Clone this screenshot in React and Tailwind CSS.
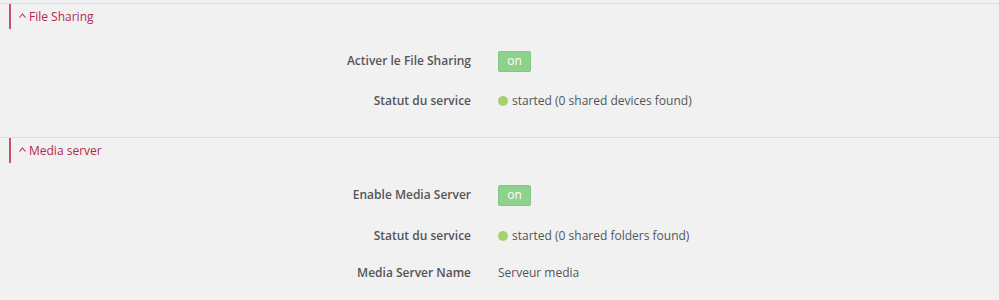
const FONT = { fontFamily: '"Open Sans", "Noto Sans", sans-serif' };

function SectionHeader({ title }) {
	return (
		<div className="flex h-[26px] items-center border-t border-[#dcdcdc]">
			<div className="ml-[9px] h-full w-[2px] bg-[#c4546a]" />
			<div className="ml-[8px] flex items-center gap-[3px] text-[12px] text-[#b3284d]">
				<svg width="7" height="5" viewBox="0 0 7 5" fill="none" className="mt-[-3px]">
					<path d="M0.5 4.5 L3.5 1 L6.5 4.5" stroke="#b3284d" strokeWidth="1.1" />
				</svg>
				<span>{title}</span>
			</div>
		</div>
	);
}

function Row({ label, children, h = 'h-[40px]' }) {
	return (
		<div className={`flex items-center ${h}`}>
			<div className="w-[471px] text-right text-[12px] font-semibold text-[#555]">{label}</div>
			<div className="pl-[27px] text-[12px] text-[#555]">{children}</div>
		</div>
	);
}

function OnButton() {
	return (
		<span className="inline-flex h-[21px] w-[33px] items-center justify-center rounded-[2px] border border-[#82c682] bg-[#8ed08e] text-[12px] text-white">
			on
		</span>
	);
}

function Status({ text }) {
	return (
		<span className="flex items-center">
			<span className="mr-[4px] inline-block h-[10px] w-[10px] rounded-full bg-[#a4d26f]" />
			{text}
		</span>
	);
}

export default function App() {
	return (
		<div className="h-[300px] w-[999px] bg-[#f1f1f1] pt-[3px]" style={FONT}>
			<SectionHeader title="File Sharing" />
			<div className="pt-[12px] pb-[16px]">
				<Row label="Activer le File Sharing">
					<OnButton />
				</Row>
				<Row label="Statut du service">
					<Status text="started (0 shared devices found)" />
				</Row>
			</div>
			<SectionHeader title="Media server" />
			<div className="pt-[12px]">
				<Row label="Enable Media Server" h="h-[40px]">
					<OnButton />
				</Row>
				<Row label="Statut du service" h="h-[41px]">
					<Status text="started (0 shared folders found)" />
				</Row>
				<Row label="Media Server Name" h="h-[34px]">
					Serveur media
				</Row>
			</div>
		</div>
	);
}
